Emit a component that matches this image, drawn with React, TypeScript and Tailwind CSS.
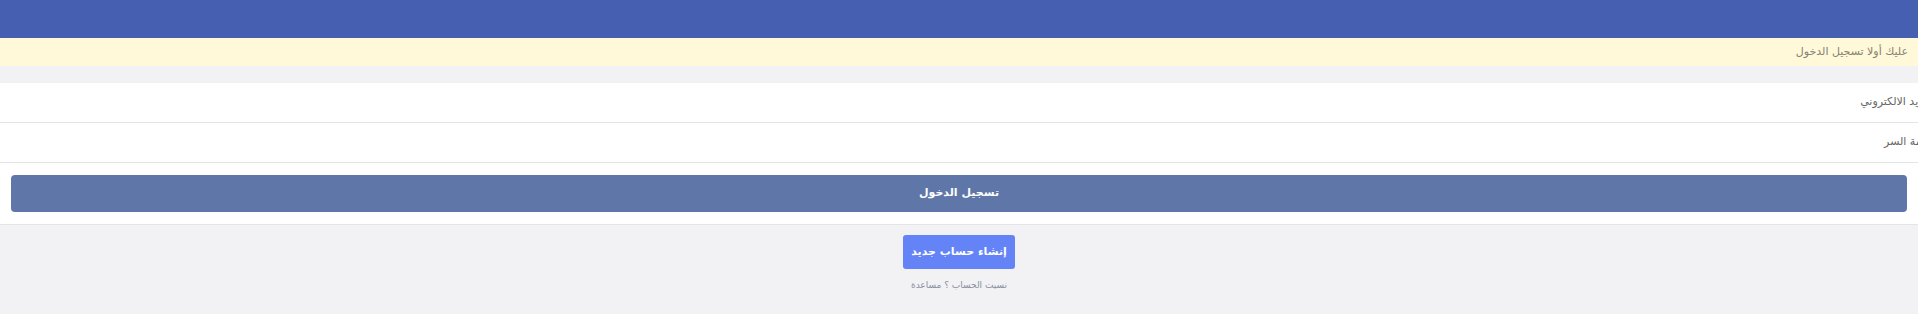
export default function App() {
  return (
    <div
      dir="rtl"
      className="min-h-[314px] w-full bg-[#f2f2f4] font-['DejaVu_Sans',sans-serif]"
    >
      {/* top bar */}
      <div className="h-[38px] bg-[#465fb0]" />

      {/* login notice */}
      <div className="flex h-[28px] items-center bg-[#fff8d9] px-[10px] text-[11px] text-[#858270]">
        عليك أولا تسجيل الدخول
      </div>

      <div className="h-[17px]" />

      {/* form card */}
      <div className="border-b border-[#e4e4e6] bg-white">
        <div className="flex h-[40px] items-center overflow-hidden border-b border-[#e4e4e6]">
          <input
            type="email"
            placeholder="البريد الالكتروني"
            className="-mr-[16px] w-[calc(100%+16px)] bg-transparent text-[11px] text-[#555] outline-none placeholder:text-[#666]"
          />
        </div>
        <div className="flex h-[40px] items-center overflow-hidden border-b border-[#e4e4e6]">
          <input
            type="password"
            placeholder="كلمة السر"
            className="-mr-[13px] w-[calc(100%+13px)] bg-transparent text-[11px] text-[#555] outline-none placeholder:text-[#666]"
          />
        </div>
        <div className="px-[11px] pb-[12px] pt-[12px]">
          <button
            type="button"
            className="flex h-[37px] w-full items-center justify-center rounded-[4px] bg-[#5e76a8] text-[11px] font-bold text-white"
          >
            تسجيل الدخول
          </button>
        </div>
      </div>

      {/* register */}
      <div className="flex flex-col items-center pt-[10px]">
        <button
          type="button"
          className="flex h-[34px] w-[112px] items-center justify-center rounded-[3px] bg-[#6383f6] text-[11px] font-bold text-white"
        >
          إنشاء حساب جديد
        </button>
        <a className="mt-[10px] text-[9px] text-[#8a8fa0]">نسيت الحساب ؟ مساعدة</a>
      </div>
    </div>
  );
}
